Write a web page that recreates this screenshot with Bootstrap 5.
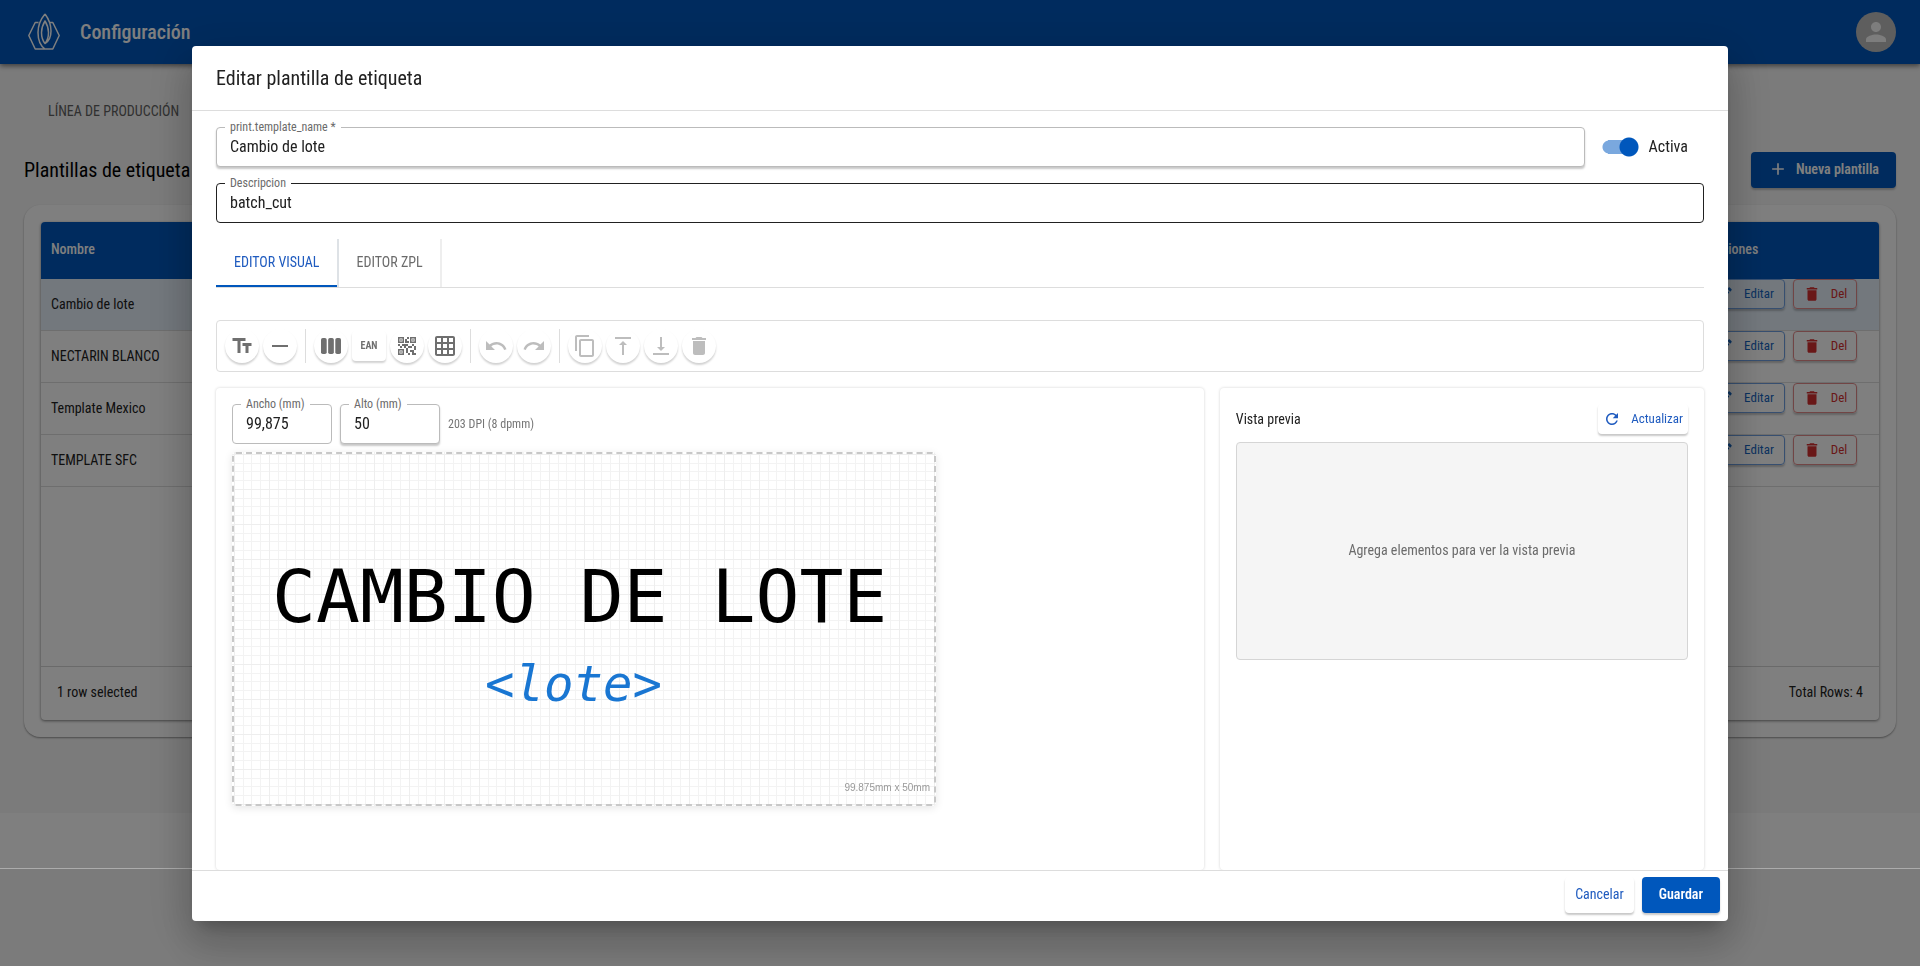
<!DOCTYPE html>
<html lang="es">
<head>
<meta charset="utf-8">
<meta name="viewport" content="width=device-width, initial-scale=1">
<title>Configuración</title>
<link href="https://cdn.jsdelivr.net/npm/bootstrap@5.3.0/dist/css/bootstrap.min.css" rel="stylesheet">
<style>
:root{--brand:#0057bc;--ink:#212121;--soft:#757575;--line:#ddd;--raise:0 2px 2px rgba(0,0,0,.22)}
body{font-family:"Roboto Condensed","Liberation Sans Narrow",Roboto,sans-serif;background:#f7f7f7;color:var(--ink);font-size:14px;line-height:20px;overflow:hidden}
svg{fill:currentColor;flex:none;display:block}
.page{min-height:100vh}
.topbar{background:var(--brand);height:64px;box-shadow:0 2px 5px rgba(0,0,0,.5);color:#fff;padding:0 24px 0 28px}
.topbar .brandname{font-size:20px;font-weight:500}
.avatar{width:40px;height:40px;background:#bdbdbd;color:#fafafa;border:0;padding:0}
.page-main{min-height:calc(100vh - 217px);padding:0 24px}
.page-foot{height:55px;background:#fff}
.crumb{padding:37px 24px 0;color:#616161;text-decoration:none;display:block}
.page-head{margin:31px 0 17px}
.page-title{font-size:20px;line-height:24px;margin:0;color:#000}
.btn{--bs-btn-font-size:14px;--bs-btn-line-height:20px;--bs-btn-border-radius:4px;box-shadow:var(--raise);display:inline-flex;align-items:center;justify-content:center}
.btn-brand{background:var(--brand);color:#fff;font-weight:600;height:36px;padding:0 17px 2px;border:0}
.listcard{border-radius:16px;padding:17px;background:#fff;box-shadow:0 1px 2px rgba(0,0,0,.4)}
.gridbox{border-radius:4px;box-shadow:0 1px 3px rgba(0,0,0,.5);min-height:498px;overflow:hidden}
.gridbox table{margin:0;table-layout:fixed;font-size:14px;border-collapse:separate;border-spacing:0}
.gridbox th{background:var(--brand);color:#fff;height:57px;padding:0 10px 4px;vertical-align:middle;font-weight:500;border:0}
.gridbox td{height:52px;padding:0 10px 1px;vertical-align:middle;border-bottom:1px solid #ddd;color:var(--ink)}
.gridbox td.acts{vertical-align:top;padding-left:8px}
.gridbox tr.picked td{background:#e6f0fa}
.acts-col{width:182px}
.btn-row{height:30px;width:64px;padding:0;--bs-btn-font-size:13px;gap:10px;background:none}
.btn-edit{color:#1565c0;border-color:#6f9fe0;width:80px}
.btn-del{color:#d32f2f;border-color:#e28a8a}
.gridfoot{border-top:1px solid #d5d5d5;height:54px;padding:0 16px 4px}
.modal{background:linear-gradient(rgba(0,0,0,.5),rgba(0,0,0,.5)) top/100% calc(100% - 98px) no-repeat,
 linear-gradient(rgba(0,0,0,.5),rgba(0,0,0,.5)) bottom/100% 97px no-repeat,
 linear-gradient(rgba(0,0,0,.3),rgba(0,0,0,.3)) 0 calc(100% - 97px)/100% 1px no-repeat}
.modal-dialog{max-width:1536px;margin:46px auto 45px;height:calc(100vh - 91px)}
.modal-content{height:100%;border:0;border-radius:4px;box-shadow:0 11px 15px -7px rgba(0,0,0,.2),0 24px 38px 3px rgba(0,0,0,.14),0 9px 46px 8px rgba(0,0,0,.12);color:var(--ink)}
.modal-header{height:65px;padding:0 24px;border-color:var(--line);flex:none}
.modal-title{font-size:20px;line-height:28px;font-weight:400}
.modal-body{padding:16px 24px 0;overflow:hidden;min-height:0}
.modal-footer{padding:6px 8px 8px;border-color:var(--line);gap:8px;flex:none;border-radius:0}
.modal-footer>*{margin:0}
.btn-plain{background:#fff;color:#1f5bbf;border:0;padding:0 10px 2px;height:36px}
.outlined{position:relative}
.outlined label{position:absolute;left:9px;top:-10px;padding:0 5px;background:#fff;font-size:12px;line-height:20px;color:#6b6b6b}
.outlined .form-control{height:40px;border:1px solid #bbb;border-radius:4px;font-size:16px;padding:0 13px 2px;color:var(--ink);background:#fff;box-shadow:none}
.outlined .lifted{box-shadow:var(--raise)}
.outlined .dark-line{border-color:#212121}
.sized{width:100px}
.toggle{width:40px;height:20px;position:relative;appearance:none;margin:0;background:radial-gradient(circle at 28px 10px,var(--brand) 0 9px,transparent 10px),linear-gradient(#7aa8de,#7aa8de) 7px 3px/20px 14px no-repeat,radial-gradient(circle at 8px 10px,#7aa8de 0 6px,transparent 7px)}
.active-label{font-size:16px;line-height:24px}
.nav-tabs{border-color:var(--line);margin-top:16px;height:49px;flex:none}
.nav-tabs .nav-link{border:0;border-right:2px solid #eee;border-radius:0;height:48px;padding:0 17px 2px;color:#6b6b6b;margin:0}
.nav-tabs .nav-link.active{color:#1f5bbf;background:none;padding:0 18px 2px;box-shadow:inset 0 -2px var(--brand)}
.toolbar{margin-top:32px;border:1px solid #ddd;border-radius:4px;padding:8px;gap:4px}
.tool{width:34px;height:34px;border-radius:50%;border:0;padding:0;background:#fff;color:#6f6f6f;box-shadow:0 2px 2px rgba(0,0,0,.18);display:flex;align-items:center;justify-content:center}
.tool:disabled{color:#bdbdbd}
.tool-text{border-radius:4px;height:30px;font-size:10px;font-weight:700}
.sep{width:1px;height:34px;background:#ddd;margin:0 4px}
.panes{display:grid;grid-template-columns:51fr 25fr;gap:16px;margin-top:16px;min-height:0}
.pane{border-radius:4px;padding:16px;box-shadow:0 0 3px rgba(0,0,0,.18)}
.dpi{font-size:12px;color:#757575}
.label-canvas{box-sizing:content-box;width:700px;height:350px;border:2px dashed #c8c8c8;border-radius:4px;margin-top:8px;position:relative;overflow:hidden;box-shadow:0 2px 8px rgba(0,0,0,.1);
 background:linear-gradient(#eee 0 1px,transparent 1px) 0 0/35px 35px,linear-gradient(90deg,#eee 0 1px,transparent 1px) 0 0/35px 35px,
 linear-gradient(transparent 9px,#f3f3f3 9px 10px,transparent 10px 17px,#f3f3f3 17px 18px,transparent 18px 26px,#f3f3f3 26px 27px,transparent 27px) 0 0/35px 35px,
 linear-gradient(90deg,transparent 9px,#f3f3f3 9px 10px,transparent 10px 17px,#f3f3f3 17px 18px,transparent 18px 26px,#f3f3f3 26px 27px,transparent 27px) 0 0/35px 35px,#fff}
.label-text{position:absolute;white-space:pre;font-family:"DejaVu Sans Mono",monospace;color:#000}
.lt-title{left:38px;top:103px;font-size:73px;line-height:80px}
.lt-field{left:251px;top:203px;font-size:49px;line-height:56px;font-style:italic;color:#1976d2}
.canvas-size{position:absolute;right:4px;bottom:8px;font-family:"Liberation Sans",Arial,sans-serif;font-size:10px;line-height:16px;color:#999}
.btn-refresh{background:#fff;color:#1f5bbf;border:0;height:30px;padding:0 5px;--bs-btn-font-size:13px;gap:10px}
.preview{background:#f5f5f5;border:1px solid #d5d5d5;border-radius:4px;height:218px;margin-top:8px;color:#6b6b6b;padding-bottom:2px}
</style>
</head>
<body>
<div class="page d-flex flex-column">
  <header class="topbar d-flex align-items-center">
    <svg width="32" height="38" viewBox="0 0 32 38" style="fill:none" stroke="#fff" stroke-width="1.500" stroke-linejoin="round"><path d="M10.500 9.500H7.200L.8 22.500l6.400 13.500h17.600l6.400-13.500-6.400-13H22M17 1C12 7 10 13 10 19.500c0 8 2 13 7 16.500M17 1c3 4 6 10 6 17 0 5-1.500 10-6 12.500M17 8c-2.500 4-3.500 7.500-3.500 11.500s1 8 3.500 11c2.500-3 3.500-7 3.500-11s-1-7.500-3.500-11.500z"/></svg>
    <span class="brandname ms-3 ps-1">Configuración</span>
    <button class="avatar rounded-circle ms-auto d-flex align-items-center justify-content-center" aria-label="Cuenta"><svg width="30" height="30" viewBox="0 0 24 24"><path d="M12 12c2.210 0 4-1.790 4-4s-1.790-4-4-4-4 1.790-4 4 1.790 4 4 4zm0 2c-2.670 0-8 1.340-8 4v2h16v-2c0-2.660-5.330-4-8-4z"/></svg></button>
  </header>
  <main class="page-main">
    <a class="crumb" href="#">LÍNEA DE PRODUCCIÓN</a>
    <div class="page-head d-flex align-items-center justify-content-between">
      <h1 class="page-title fw-normal">Plantillas de etiqueta</h1>
      <button class="btn btn-brand gap-2"><svg width="20" height="20" viewBox="0 0 24 24"><path d="M19 13h-6v6h-2v-6H5v-2h6V5h2v6h6v2z"/></svg>Nueva plantilla</button>
    </div>
    <section class="listcard">
      <div class="gridbox d-flex flex-column">
        <table class="table">
          <thead><tr><th>Nombre</th><th class="acts-col">Acciones</th></tr></thead>
          <tbody id="rows"></tbody>
        </table>
        <div class="gridfoot d-flex align-items-center justify-content-between mt-auto"><span>1 row selected</span><span>Total Rows: 4</span></div>
      </div>
    </section>
  </main>
  <div class="page-foot"></div>
</div>

<div class="modal d-block" role="dialog" aria-labelledby="dlgTitle">
  <div class="modal-dialog">
    <div class="modal-content">
      <div class="modal-header"><h2 class="modal-title" id="dlgTitle">Editar plantilla de etiqueta</h2></div>
      <div class="modal-body d-flex flex-column">
        <div class="d-flex align-items-center mb-3">
          <div class="outlined flex-grow-1"><label for="tname">print.template_name *</label><input class="form-control lifted" id="tname" value="Cambio de lote"></div>
          <div class="d-flex align-items-center ms-3 pe-3 gap-2"><input type="checkbox" role="switch" class="toggle" id="act" checked><label class="active-label" for="act">Activa</label></div>
        </div>
        <div class="outlined"><label for="tdesc">Descripcion</label><input class="form-control dark-line" id="tdesc" value="batch_cut"></div>
        <div class="nav nav-tabs" role="tablist">
          <button class="nav-link active" role="tab">EDITOR VISUAL</button>
          <button class="nav-link" role="tab">EDITOR ZPL</button>
        </div>
        <div class="toolbar d-flex align-items-center">
          <button class="tool" aria-label="Texto"><svg width="24" height="24" viewBox="0 0 24 24"><path d="M2.500 4v3h5v12h3V7h5V4h-13zm19 5h-9v3h3v7h3v-7h3V9z"/></svg></button>
          <button class="tool" aria-label="Línea"><svg width="24" height="24" viewBox="0 0 24 24"><path d="M4 11h16v2H4z"/></svg></button>
          <span class="sep"></span>
          <button class="tool" aria-label="Código de barras"><svg width="24" height="24" viewBox="0 0 24 24"><rect x="2" y="4" width="5.700" height="16" rx="1.800"/><rect x="9.150" y="4" width="5.700" height="16" rx="1.800"/><rect x="16.300" y="4" width="5.700" height="16" rx="1.800"/></svg></button>
          <button class="tool tool-text">EAN</button>
          <button class="tool" aria-label="Código QR"><svg width="24" height="24" viewBox="0 0 24 24"><path d="M15 21h-2v-2h2v2zm-2-7h-2v5h2v-5zm8-2h-2v4h2v-4zm-2-2h-2v2h2v-2zM7 12H5v2h2v-2zm-2-2H3v2h2v-2zm7-5h2V3h-2v2zm-7.500-.5v3h3v-3h-3zM9 9H3V3h6v6zm-4.500 7.500v3h3v-3h-3zM9 21H3v-6h6v6zm7.500-16.500v3h3v-3h-3zM21 9h-6V3h6v6zm-2 10v-3h-4v2h2v3h4v-2h-2zm-2-7h-4v2h4v-2zm-4-2H7v2h2v2h2v-2h2v-2zm1-1V7h-2V5h-2v4h4zM6.750 5.250h-1.500v1.500h1.500v-1.500zm0 12h-1.500v1.500h1.500v-1.500zm12-12h-1.500v1.500h1.500v-1.500z"/></svg></button>
          <button class="tool" aria-label="Cuadrícula"><svg width="24" height="24" viewBox="0 0 24 24"><path d="M20 2H4c-1.100 0-2 .9-2 2v16c0 1.100.9 2 2 2h16c1.100 0 2-.9 2-2V4c0-1.100-.9-2-2-2zM8 20H4v-4h4v4zm0-6H4v-4h4v4zm0-6H4V4h4v4zm6 12h-4v-4h4v4zm0-6h-4v-4h4v4zm0-6h-4V4h4v4zm6 12h-4v-4h4v4zm0-6h-4v-4h4v4zm0-6h-4V4h4v4z"/></svg></button>
          <span class="sep"></span>
          <button class="tool" disabled aria-label="Deshacer"><svg width="24" height="24" viewBox="0 0 24 24"><path d="M12.500 8c-2.650 0-5.050.99-6.900 2.600L2 7v9h9l-3.620-3.620c1.390-1.160 3.160-1.880 5.120-1.880 3.540 0 6.550 2.310 7.600 5.500l2.370-.78C21.080 11.030 17.150 8 12.500 8z"/></svg></button>
          <button class="tool" disabled aria-label="Rehacer"><svg width="24" height="24" viewBox="0 0 24 24"><path d="M18.400 10.600C16.550 8.990 14.150 8 11.500 8c-4.650 0-8.580 3.030-9.960 7.220L3.900 16c1.050-3.190 4.050-5.500 7.600-5.500 1.950 0 3.730.72 5.120 1.880L13 16h9V7l-3.600 3.600z"/></svg></button>
          <span class="sep"></span>
          <button class="tool" disabled aria-label="Duplicar"><svg width="24" height="24" viewBox="0 0 24 24"><path d="M16 1H4c-1.100 0-2 .9-2 2v14h2V3h12V1zm3 4H8c-1.100 0-2 .9-2 2v14c0 1.100.9 2 2 2h11c1.100 0 2-.9 2-2V7c0-1.100-.9-2-2-2zm0 16H8V7h11v14z"/></svg></button>
          <button class="tool" disabled aria-label="Traer al frente"><svg width="24" height="24" viewBox="0 0 24 24"><path d="M8 11h3v10h2V11h3l-4-4-4 4zM4 3v2h16V3H4z"/></svg></button>
          <button class="tool" disabled aria-label="Enviar al fondo"><svg width="24" height="24" viewBox="0 0 24 24"><path d="M16 13h-3V3h-2v10H8l4 4 4-4zM4 19v2h16v-2H4z"/></svg></button>
          <button class="tool" disabled aria-label="Eliminar"><svg width="24" height="24" viewBox="0 0 24 24"><path d="M6 19c0 1.100.9 2 2 2h8c1.100 0 2-.9 2-2V7H6v12zM19 4h-3.500l-1-1h-5l-1 1H5v2h14V4z"/></svg></button>
        </div>
        <div class="panes flex-grow-1">
          <section class="pane">
            <div class="d-flex align-items-center gap-2">
              <div class="outlined sized"><label for="w">Ancho (mm)</label><input class="form-control" id="w" value="99,875"></div>
              <div class="outlined sized"><label for="h">Alto (mm)</label><input class="form-control lifted" id="h" value="50"></div>
              <span class="dpi">203 DPI (8 dpmm)</span>
            </div>
            <div class="label-canvas">
              <span class="label-text lt-title">CAMBIO DE LOTE</span>
              <span class="label-text lt-field">&lt;lote&gt;</span>
              <span class="canvas-size">99.875mm x 50mm</span>
            </div>
          </section>
          <section class="pane">
            <div class="d-flex align-items-center justify-content-between">
              <span>Vista previa</span>
              <button class="btn btn-refresh"><svg width="18" height="18" viewBox="0 0 24 24"><path d="M17.650 6.350C16.200 4.900 14.210 4 12 4c-4.420 0-7.990 3.580-7.990 8s3.570 8 7.990 8c3.730 0 6.840-2.550 7.730-6h-2.080c-.82 2.330-3.040 4-5.650 4-3.310 0-6-2.690-6-6s2.690-6 6-6c1.660 0 3.140.69 4.220 1.780L13 11h7V4l-2.350 2.350z"/></svg>Actualizar</button>
            </div>
            <div class="preview d-flex align-items-center justify-content-center">Agrega elementos para ver la vista previa</div>
          </section>
        </div>
      </div>
      <div class="modal-footer">
        <button class="btn btn-plain">Cancelar</button>
        <button class="btn btn-brand">Guardar</button>
      </div>
    </div>
  </div>
</div>
<script src="https://cdn.jsdelivr.net/npm/bootstrap@5.3.0/dist/js/bootstrap.bundle.min.js"></script>
<script>
const pencil='<svg width="18" height="18" viewBox="0 0 24 24"><path d="M3 17.250V21h3.750L17.810 9.940l-3.750-3.750L3 17.250zM20.710 7.040c.39-.39.39-1.020 0-1.410l-2.340-2.340c-.39-.39-1.020-.39-1.410 0l-1.830 1.830 3.750 3.750 1.830-1.830z"/></svg>';
const bin='<svg width="18" height="18" viewBox="0 0 24 24"><path d="M6 19c0 1.100.9 2 2 2h8c1.100 0 2-.9 2-2V7H6v12zM19 4h-3.500l-1-1h-5l-1 1H5v2h14V4z"/></svg>';
document.getElementById('rows').innerHTML=['Cambio de lote','NECTARIN BLANCO','Template Mexico','TEMPLATE SFC'].map((n,i)=>
 `<tr class="${i?'':'picked'}"><td>${n}</td><td class="acts"><div class="d-flex gap-2"><button class="btn btn-row btn-edit">${pencil}Editar</button><button class="btn btn-row btn-del">${bin}Del</button></div></td></tr>`).join('');
</script>
</body>
</html>
